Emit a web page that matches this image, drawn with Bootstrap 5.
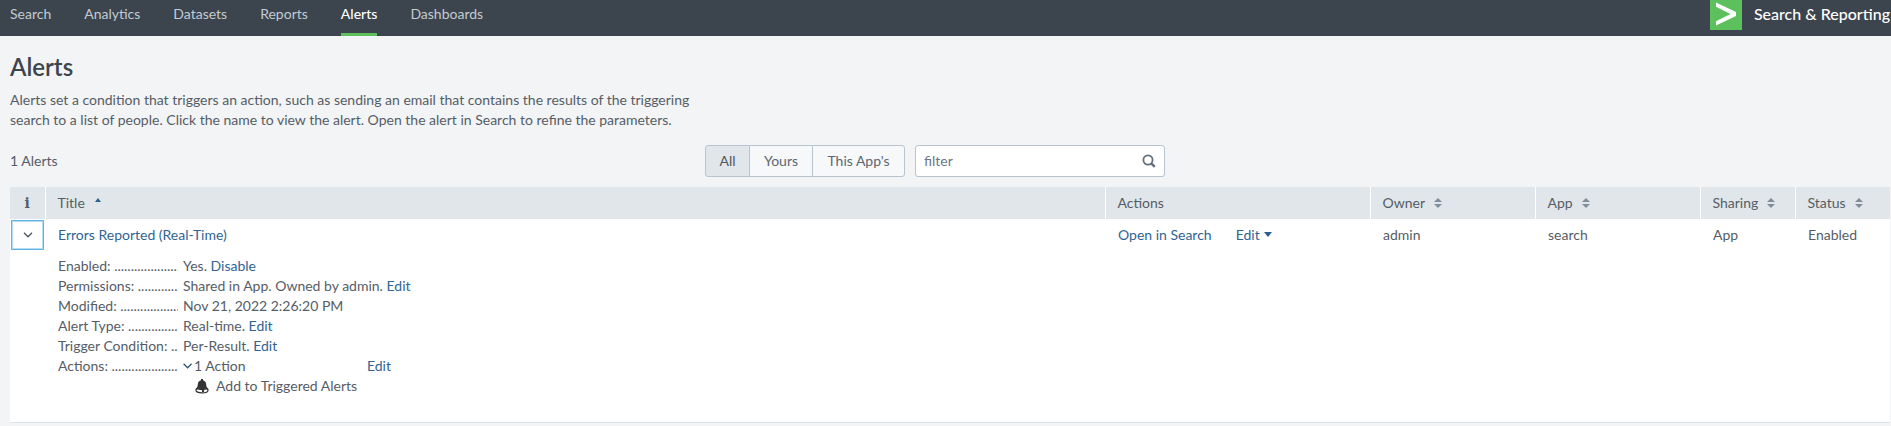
<!DOCTYPE html>
<html lang="en">
<head>
<meta charset="utf-8">
<meta name="viewport" content="width=device-width, initial-scale=1">
<title>Alerts | Search &amp; Reporting</title>
<link href="https://cdn.jsdelivr.net/npm/bootstrap@5.3.0/dist/css/bootstrap.min.css" rel="stylesheet">
<style>
  body { background: #f2f4f5; color: #565d66; font: 14px/20px Lato, "Open Sans", sans-serif; }
  a { color: #2f6494; text-decoration: none; }
  a:hover { text-decoration: underline; }
  svg { display: block; }

  .app-bar { background: #3c444d; height: 36px; padding: 0 1px 0 10px; }
  .app-tabs { gap: 33px; }
  .app-tabs .nav-link { color: #c3cbd4; padding: 4px 0 9px; height: 36px; }
  .app-tabs .nav-link.active { color: #fff; font-weight: 500; border-bottom: 3px solid #5cc05c; }
  .app-name { color: #fff; font-size: 16px; line-height: 28px; font-weight: 500; gap: 12px; }

  .page-body { padding: 0 1px 2px 10px; }
  .page-title { font-size: 24px; line-height: 28px; font-weight: 600; color: #3c444d; margin: 17px 0 9px; }
  .page-intro { max-width: 700px; margin-bottom: 15px; }

  .tool-row { display: grid; grid-template-columns: 1fr 490px 1fr; margin-bottom: 10px; }
  .scope-group { width: 200px; }
  .scope-group .btn { --bs-btn-padding-x: 0; --bs-btn-padding-y: 5px; --bs-btn-font-size: 14px; --bs-btn-line-height: 20px;
    --bs-btn-color: #5c6773; --bs-btn-bg: #f7f8fa; --bs-btn-border-color: #b8c4d0; --bs-btn-border-radius: 3px;
    --bs-btn-active-color: #4f565f; --bs-btn-active-bg: #e1e6eb; --bs-btn-active-border-color: #b8c4d0; }
  .scope-group .scope-all { flex: 0 0 45px; }
  .scope-group .scope-yours { flex: 0 0 64px; }
  .filter-box { width: 250px; margin-left: 10px; }
  .filter-box input { height: 32px; padding: 4px 32px 6px 8px; font-size: 14px; line-height: 20px; border: 1px solid #b8c4d0; border-radius: 3px; }
  .filter-box input::placeholder { color: #6b7785; }
  .filter-box svg { position: absolute; right: 9px; top: 9px; }

  .alert-table { table-layout: fixed; --bs-table-bg: #fff; color: inherit; border-bottom: 1px solid #dde3e8; }
  .alert-table > :not(caption) > * > * { border: 0; color: inherit; padding: 6px 12px; }
  .alert-table > thead > tr > th { background: #e1e6ea; font-weight: 400; box-shadow: none; }
  .alert-table > thead > tr > th + th { border-left: 1px solid #fff; }
  .alert-table > tbody > tr > td { padding: 6px 12px 6px 13px; }
  .alert-table > tbody > tr > .detail-cell { padding-top: 5px; }
  .alert-table > :not(caption) > tr > .cell-info { padding: 1px; text-align: center; }
  .col-info { width: 35px; }
  .col-actions { width: 265px; }
  .col-meta { width: 165px; }
  .col-sharing { width: 95px; }
  .info-mark { font: bold 14px/20px "DejaVu Serif", serif; }
  .toggle-row { width: 33px; height: 30px; padding: 0; background: #fff; border: 1px solid #5fb3e6; outline: 1px solid #b5dcf3; outline-offset: -2px; }
  .sort-btn { background: none; border: 0; padding: 0; color: inherit; gap: 9px; }
  .row-actions { gap: 24px; }

  .detail-list { display: grid; grid-template-columns: 120px 1fr; column-gap: 5px; margin: 0; padding: 0 0 20px; }
  .detail-list dt { font-weight: 400; overflow: hidden; white-space: nowrap; }
  .detail-list dt::after { content: " .............................."; }
  .detail-list dd { margin: 0; }
  .action-head { width: 208px; }
  .action-count { gap: 2px; }
  .action-item { padding-left: 12px; gap: 7px; }
</style>
</head>
<body>
<nav class="app-bar d-flex justify-content-between" aria-label="App">
  <ul class="app-tabs nav flex-nowrap">
    <li class="nav-item"><a class="nav-link" href="#">Search</a></li>
    <li class="nav-item"><a class="nav-link" href="#">Analytics</a></li>
    <li class="nav-item"><a class="nav-link" href="#">Datasets</a></li>
    <li class="nav-item"><a class="nav-link" href="#">Reports</a></li>
    <li class="nav-item"><a class="nav-link active" href="#" aria-current="page">Alerts</a></li>
    <li class="nav-item"><a class="nav-link" href="#">Dashboards</a></li>
  </ul>
  <a class="app-name d-flex" href="#">
    <svg width="32" height="30" viewBox="0 0 32 30" aria-hidden="true"><path fill="#5cc05c" d="M0 0h32v30H0z"/><path fill="#fff" d="M6 2.500 26 12v4L6 25.500v-4.300L20.500 14 6 6.800z"/></svg>
    <span>Search &amp; Reporting</span>
  </a>
</nav>

<main class="page-body">
  <h1 class="page-title">Alerts</h1>
  <p class="page-intro">Alerts set a condition that triggers an action, such as sending an email that contains the results of the triggering<br>search to a list of people. Click the name to view the alert. Open the alert in Search to refine the parameters.</p>

  <div class="tool-row align-items-center">
    <div>1 Alerts</div>
    <div class="d-flex">
      <div class="scope-group btn-group" role="group" aria-label="Owner filter">
        <button type="button" class="btn scope-all active" aria-pressed="true">All</button>
        <button type="button" class="btn scope-yours">Yours</button>
        <button type="button" class="btn">This App's</button>
      </div>
      <div class="filter-box position-relative">
        <input class="form-control" type="text" placeholder="filter" aria-label="filter">
        <svg width="14" height="14" viewBox="0 0 14 14" fill="none" stroke="#636f7b" aria-hidden="true"><circle cx="6" cy="6" r="4.600" stroke-width="1.800"/><path stroke-width="2.400" d="m9.300 9.300 3.500 3.500"/></svg>
      </div>
    </div>
  </div>

  <table class="alert-table table mb-0">
    <colgroup><col class="col-info"><col><col class="col-actions"><col class="col-meta"><col class="col-meta"><col class="col-sharing"><col class="col-sharing"></colgroup>
    <thead>
      <tr>
        <th class="cell-info align-middle" scope="col"><span class="info-mark">i</span></th>
        <th scope="col"><button class="sort-btn d-flex" type="button">Title <svg width="8" height="20" viewBox="0 0 8 20" fill="#2a5f8f" aria-hidden="true"><path d="M1 9 4 5l3 4z"/></svg></button></th>
        <th scope="col">Actions</th>
        <th scope="col"><button class="sort-btn d-flex" type="button">Owner <svg width="8" height="20" viewBox="0 0 8 20" fill="#818d99" aria-hidden="true"><path d="M0 9 4 5l4 4zM0 11h8l-4 4z"/></svg></button></th>
        <th scope="col"><button class="sort-btn d-flex" type="button">App <svg width="8" height="20" viewBox="0 0 8 20" fill="#818d99" aria-hidden="true"><path d="M0 9 4 5l4 4zM0 11h8l-4 4z"/></svg></button></th>
        <th scope="col"><button class="sort-btn d-flex" type="button">Sharing <svg width="8" height="20" viewBox="0 0 8 20" fill="#818d99" aria-hidden="true"><path d="M0 9 4 5l4 4zM0 11h8l-4 4z"/></svg></button></th>
        <th scope="col"><button class="sort-btn d-flex" type="button">Status <svg width="8" height="20" viewBox="0 0 8 20" fill="#818d99" aria-hidden="true"><path d="M0 9 4 5l4 4zM0 11h8l-4 4z"/></svg></button></th>
      </tr>
    </thead>
    <tbody>
      <tr>
        <td class="cell-info"><button class="toggle-row d-flex align-items-center justify-content-center" type="button" aria-expanded="true" aria-label="Toggle details"><svg width="10" height="6" viewBox="0 0 10 6" fill="none" stroke="#4f565f" stroke-width="1.300" aria-hidden="true"><path d="m1 .8 4 4 4-4"/></svg></button></td>
        <td><a href="#">Errors Reported (Real-Time)</a></td>
        <td>
          <div class="row-actions d-flex">
            <a href="#">Open in Search</a>
            <a class="d-flex gap-1 align-items-center" href="#" role="button">Edit <svg width="8" height="6" viewBox="0 0 8 6" fill="#2a5f8f" aria-hidden="true"><path d="M0 0h8L4 5z"/></svg></a>
          </div>
        </td>
        <td>admin</td>
        <td>search</td>
        <td>App</td>
        <td>Enabled</td>
      </tr>
      <tr>
        <td></td>
        <td class="detail-cell" colspan="6">
          <dl class="detail-list">
            <dt>Enabled:</dt><dd>Yes. <a href="#">Disable</a></dd>
            <dt>Permissions:</dt><dd>Shared in App. Owned by admin. <a href="#">Edit</a></dd>
            <dt>Modified:</dt><dd>Nov 21, 2022 2:26:20 PM</dd>
            <dt>Alert Type:</dt><dd>Real-time. <a href="#">Edit</a></dd>
            <dt>Trigger Condition:</dt><dd>Per-Result. <a href="#">Edit</a></dd>
            <dt>Actions:</dt>
            <dd>
              <div class="action-head d-flex justify-content-between">
                <span class="action-count d-flex align-items-center"><svg width="9" height="6" viewBox="0 0 9 6" fill="none" stroke="#2f5878" stroke-width="1.300" aria-hidden="true"><path d="m.6.8 4 4 4-4"/></svg>1 Action</span>
                <a href="#">Edit</a>
              </div>
              <div class="action-item d-flex align-items-center">
                <svg width="14" height="15" viewBox="0 0 14 15" aria-hidden="true"><path fill="#333" d="M6 0h2v1.200c2.300.6 3 2.300 3.200 4.300.2 2.200.8 3.500 2.500 4.700-2 1.100-11.400 1.100-13.400 0C2 9 2.600 7.700 2.800 5.500 3 3.500 3.700 1.800 6 1.200z"/><ellipse cx="7" cy="11.300" rx="6" ry="2.600" fill="#fff" stroke="#333" stroke-width="1.200"/><path fill="#333" d="M1 10.200c3-1.600 9-1.600 12 0-3 .9-9 .9-12 0z"/><circle cx="8" cy="11.900" r="1.200" fill="#333"/></svg>
                <span>Add to Triggered Alerts</span>
              </div>
            </dd>
          </dl>
        </td>
      </tr>
    </tbody>
  </table>
</main>
</body>
</html>
